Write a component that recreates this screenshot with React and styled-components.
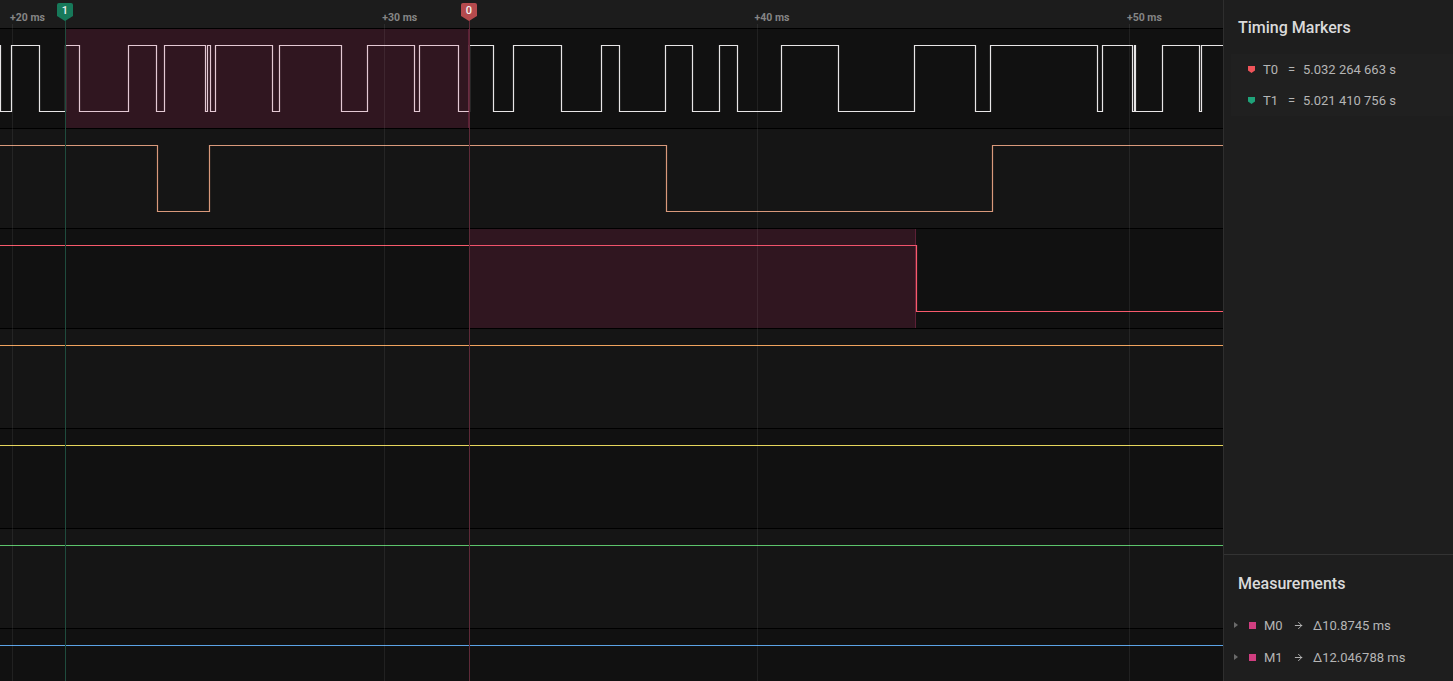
import React from 'react'
import styled, { createGlobalStyle } from 'styled-components'
import { ArrowRight } from 'lucide-react'

const PX_PER_MS = 37.23
const ZERO_X = 12 - 20 * PX_PER_MS

const GlobalStyle = createGlobalStyle`
  html, body {
    margin: 0;
    padding: 0;
    background: #111111;
    font-family: Roboto, "Liberation Sans", sans-serif;
  }
`

// each channel: starting level + x positions of every toggle
const channels = [
  {
    color: '#e8e6e7',
    start: 1,
    edges: [0, 11, 38.5, 65, 79, 128, 156, 164, 205, 207, 210, 215, 272, 279, 341, 367, 414, 419, 458, 469,
      493, 513, 561, 601, 619, 665, 692, 719, 737, 781, 838, 914, 975, 990, 1097, 1102, 1132, 1134, 1135,
      1162, 1199, 1201],
    region: { from: 65, to: 469 },
  },
  { color: '#d9997b', start: 1, edges: [157, 209, 666, 992] },
  { color: '#f75a6c', start: 1, edges: [915.5], region: { from: 469, to: 916 } },
  { color: '#f0a35e', start: 1, edges: [] },
  { color: '#e6d65c', start: 1, edges: [] },
  { color: '#5cc46c', start: 1, edges: [] },
  { color: '#5ba3e6', start: 1, edges: [] },
]

const ticks = [20, 30, 40, 50]

const markers = [
  { id: '1', x: 65, tone: 'green' },
  { id: '0', x: 469, tone: 'red' },
]

const timing = [
  { name: 'T0', tone: 'red', value: '5.032 264 663 s' },
  { name: 'T1', tone: 'green', value: '5.021 410 756 s' },
]

const measurements = [
  { name: 'M0', value: 'Δ10.8745 ms' },
  { name: 'M1', value: 'Δ12.046788 ms' },
]

const tones = {
  green: { flag: '#17795a', line: '#1f4b3d', icon: '#1fa37a' },
  red: { flag: '#b54a4d', line: '#5e2a38', icon: '#f0545a' },
}

const HIGH = 16.5
const LOW = 82.5
const WIDTH = 1223

function wavePath(start, edges) {
  let level = start
  const y = (l) => (l ? HIGH : LOW)
  let d = `M0 ${y(level)}`
  edges.forEach((e) => {
    const x = Math.round(e) + 0.5
    d += ` L${x} ${y(level)}`
    level = level ? 0 : 1
    d += ` L${x} ${y(level)}`
  })
  d += ` L${WIDTH} ${y(level)}`
  return d
}

function App() {
  return (
    <>
      <GlobalStyle />
      <Screen>
        <Viewer>
          <Ruler>
            {ticks.map((t) => (
              <TickLabel key={t} style={{ left: ZERO_X + t * PX_PER_MS - 2 }}>+{t} ms</TickLabel>
            ))}
            {markers.map((m) => (
              <Flag key={m.id} tone={m.tone} style={{ left: m.x - 8 }}>{m.id}</Flag>
            ))}
          </Ruler>
          {channels.map((ch, i) => (
            <Row key={i} shade={i % 2 === 1 ? 'light' : 'dark'}>
              <Wave width={WIDTH} height={99}>
                <path d={wavePath(ch.start, ch.edges)} stroke={ch.color} strokeWidth="1.2" fill="none" />
              </Wave>
              {ch.region && (
                <Region style={{ left: ch.region.from, width: ch.region.to - ch.region.from }} />
              )}
            </Row>
          ))}
          {ticks.map((t) => (
            <GridLine key={t} style={{ left: Math.round(ZERO_X + t * PX_PER_MS) }} />
          ))}
          {markers.map((m) => (
            <MarkerLine key={m.id} tone={m.tone} style={{ left: m.x }} />
          ))}
        </Viewer>

        <Side>
          <Section>
            <Heading>Timing Markers</Heading>
            <Band>
              {timing.map((t) => (
                <Entry key={t.name}>
                  <Pin tone={t.tone} />
                  <Name>{t.name}</Name>
                  <Eq>=</Eq>
                  <span>{t.value}</span>
                </Entry>
              ))}
            </Band>
          </Section>
          <Footer>
            <Heading lowered>Measurements</Heading>
            {measurements.map((m) => (
              <MeasureRow key={m.name}>
                <Caret />
                <Swatch />
                <MName>{m.name}</MName>
                <Arrow>
                  <ArrowRight size={11} strokeWidth={2} />
                </Arrow>
                <span>{m.value}</span>
              </MeasureRow>
            ))}
          </Footer>
        </Side>
      </Screen>
    </>
  )
}

const Screen = styled.div`
  display: flex;
  width: 1453px;
  height: 681px;
  overflow: hidden;
`

const Viewer = styled.div`
  position: relative;
  display: flex;
  flex-direction: column;
  width: 1223px;
  flex-shrink: 0;
  overflow: hidden;
`

const Ruler = styled.div`
  position: relative;
  height: 28px;
  flex-shrink: 0;
  background: #1c1c1c;
  border-bottom: 1px solid #000;
`

const TickLabel = styled.span`
  position: absolute;
  top: 12px;
  font-size: 10.5px;
  line-height: 12px;
  font-weight: 700;
  color: #858585;
  white-space: nowrap;
`

const Flag = styled.div`
  position: absolute;
  top: 3px;
  width: 16px;
  height: 18px;
  background: ${(p) => tones[p.tone].flag};
  border-radius: 2px 2px 0 0;
  clip-path: polygon(0 0, 100% 0, 100% 72%, 50% 100%, 0 72%);
  color: #f2f2f2;
  font-size: 11px;
  font-weight: 500;
  line-height: 16px;
  text-align: center;
  z-index: 3;
`

const Row = styled.div`
  position: relative;
  height: 99px;
  flex-shrink: 0;
  background: ${(p) => (p.shade === 'light' ? '#151515' : '#111111')};
  border-bottom: 1px solid #000;
`

const Wave = styled.svg`
  display: block;
`

const Region = styled.div`
  position: absolute;
  top: 0;
  bottom: 0;
  background: rgba(210, 50, 110, 0.16);
  border-right: 1px solid rgba(210, 60, 110, 0.28);
  box-sizing: border-box;
`

const GridLine = styled.div`
  position: absolute;
  top: 24px;
  bottom: 0;
  width: 1px;
  background: rgba(255, 255, 255, 0.07);
  pointer-events: none;
`

const MarkerLine = styled.div`
  position: absolute;
  top: 20px;
  bottom: 0;
  width: 1px;
  background: ${(p) => tones[p.tone].line};
  z-index: 2;
  pointer-events: none;
`

const Side = styled.aside`
  display: flex;
  flex-direction: column;
  width: 230px;
  flex-shrink: 0;
  box-sizing: border-box;
  background: #1e1e1e;
  border-left: 1px solid #2e2e2e;
  color: #b9b9b9;
`

const Section = styled.div`
  flex: 1;
`

const Heading = styled.div`
  display: flex;
  align-items: center;
  box-sizing: border-box;
  height: 54px;
  padding-left: 14px;
  padding-top: ${(p) => (p.lowered ? '2px' : '0')};
  font-size: 16px;
  font-weight: 500;
  color: #dadada;
`

const Band = styled.div`
  margin-left: 7px;
  background: #202020;
`

const Entry = styled.div`
  display: flex;
  align-items: center;
  height: 31px;
  padding-left: 17px;
  font-size: 13px;
  color: #b5b5b5;
`

const Pin = styled.span`
  width: 7px;
  height: 7px;
  margin-right: 8px;
  background: ${(p) => tones[p.tone].icon};
  clip-path: polygon(0 0, 100% 0, 100% 65%, 50% 100%, 0 65%);
`

const Name = styled.span`
  width: 25px;
`

const Eq = styled.span`
  width: 15px;
`

const Footer = styled.div`
  height: 127px;
  box-sizing: border-box;
  border-top: 1px solid #333;
`

const MeasureRow = styled.div`
  display: flex;
  align-items: center;
  height: 32px;
  padding-left: 10px;
  font-size: 13px;
  color: #b5b5b5;
`

const Caret = styled.span`
  width: 0;
  height: 0;
  margin-right: 11px;
  border-top: 3.5px solid transparent;
  border-bottom: 3.5px solid transparent;
  border-left: 4px solid #6a6a6a;
`

const Swatch = styled.span`
  width: 7px;
  height: 7px;
  margin-right: 8px;
  background: #d03e80;
`

const MName = styled.span`
  width: 29px;
`

const Arrow = styled.span`
  display: flex;
  align-items: center;
  width: 20px;
  color: #bdbdbd;
`

export default App
